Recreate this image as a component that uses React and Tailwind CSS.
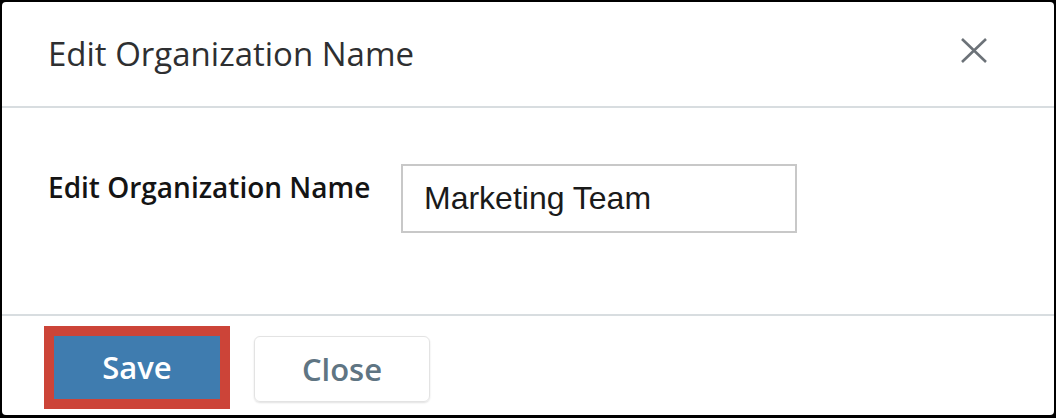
export default function App() {
    // modal frame: black edge around a white card
    return (
        <div className="w-[1056px] h-[418px] bg-black pt-[2px] pl-[2px] pr-[2px] pb-[3px]">
            <div className="h-full bg-white rounded-[4px] flex flex-col font-['Open_Sans',sans-serif]">
                {/* header */}
                <div className="h-[106px] shrink-0 flex items-center justify-between pl-[46px] pr-[67px] border-b-2 border-[#d8dde0]">
                    <h1 className="text-[33px] font-medium text-[#2e2f31]">Edit Organization Name</h1>
                    <svg width="26" height="25" viewBox="0 0 26 25" className="mb-[8px] text-[#6c7278]">
                        <path d="M1 1 L25 24 M25 1 L1 24" stroke="currentColor" strokeWidth="2.6" fill="none" />
                    </svg>
                </div>

                {/* body */}
                <div className="h-[206px] shrink-0 flex items-start pt-[56px] pl-[46px]">
                    <label className="w-[353px] pt-[2px] text-[28px] font-semibold text-[#141414]">
                        Edit Organization Name
                    </label>
                    <input
                        defaultValue="Marketing Team"
                        className="w-[396px] h-[69px] border-2 border-[#c8c8c8] px-[21px] text-[32px] text-[#1a1a1a] font-['Liberation_Sans',Arial,sans-serif] outline-none"
                    />
                </div>

                {/* footer */}
                <div className="flex-1 flex items-start border-t-2 border-[#d8dde0] pt-[10px] pl-[42px]">
                    <button className="w-[186px] h-[83px] border-[10px] border-[#cc4438] bg-[#3f7caf] text-white text-[31px] font-semibold">
                        Save
                    </button>
                    <button className="ml-[24px] mt-[10px] w-[176px] h-[66px] rounded-[6px] border border-[#e3e3e3] shadow-[0_1px_2px_rgba(0,0,0,0.12)] text-[#5f7583] text-[31px] font-semibold">
                        Close
                    </button>
                </div>
            </div>
        </div>
    );
}
